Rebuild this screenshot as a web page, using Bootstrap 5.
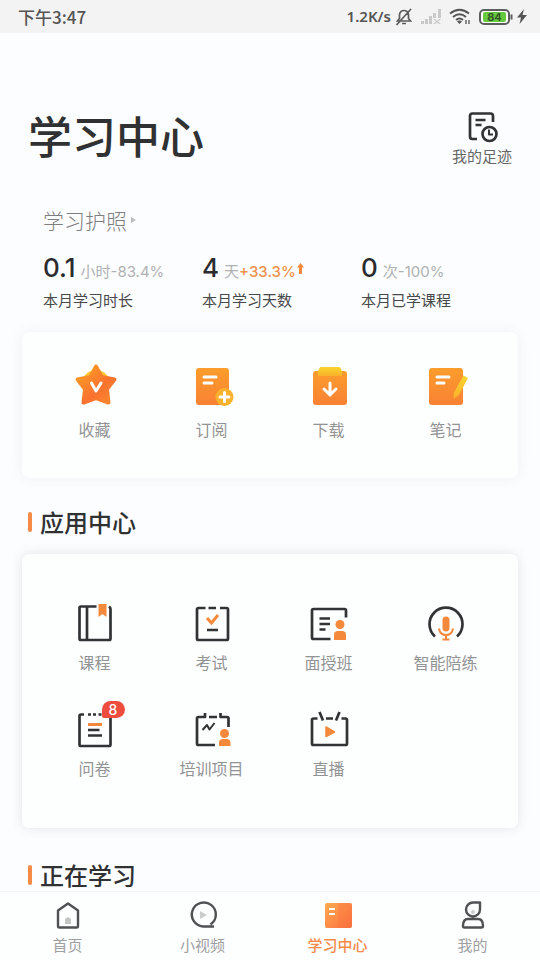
<!DOCTYPE html>
<html lang="zh-CN">
<head>
<meta charset="utf-8">
<meta name="viewport" content="width=device-width, initial-scale=1">
<title>学习中心</title>
<link href="https://cdn.jsdelivr.net/npm/bootstrap@5.3.0/dist/css/bootstrap.min.css" rel="stylesheet">
<style>
  body { font-family: "Noto Sans CJK SC", sans-serif; background: #fcfdfe; color: #303133; }
  a { color: inherit; text-decoration: none; }
  svg { display: block; overflow: visible; }
  .statusbar { background: #f3f3f3; height: 33px; padding: 0 13px 0 18px; color: #555; font-size: 17px; font-weight: 500; }
  .net-speed { font-family: "Noto Sans", sans-serif; font-size: 15px; font-weight: 600; }
  .scroller { min-height: 0; overflow-y: auto; scrollbar-width: none; }
  .scroller::-webkit-scrollbar { display: none; }
  .page-head { padding: 74px 28px 0 28px; }
  .page-title { font-size: 44px; line-height: 56px; font-weight: 500; }
  .footprint { font-size: 15px; line-height: 22px; color: #666; padding-top: 2px; }
  .passport { padding: 38px 20px 0 43px; }
  .passport-link { font-size: 21px; line-height: 30px; font-weight: 300; color: #7e7e80; }
  .stats { margin-top: 15px; }
  .stat-line { height: 36px; line-height: 36px; font-size: 15px; color: #b0b1b3; gap: 5px; }
  .figure-num { font-family: Inter, sans-serif; font-size: 26px; font-weight: 500; color: #2b2c2e; }
  .delta { font-family: Inter, sans-serif; }
  .up { color: #ee924e; font-weight: 500; }
  .rise { margin-left: -4px; }
  .stat-name { font-size: 15px; line-height: 22px; margin-top: 3px; color: #48494b; }
  .panel { margin: 0 22px; padding: 34px 14px 37px; border-radius: 7px; background: #fdfefe; box-shadow: 0 0 14px rgba(60,70,100,.07); }
  .panel-top { margin-top: 21px; }
  .panel-apps { margin-top: 15px; padding: 49px 14px 48px; row-gap: 35px; box-shadow: 0 0 12px rgba(50,60,80,.13); }
  .tile { font-size: 16px; line-height: 24px; color: #929395; gap: 7px; }
  .panel-top .tile { gap: 11px; }
  .section-title { font-size: 24px; line-height: 34px; font-weight: 500; margin: 27px 28px 0; gap: 8px; }
  .section-title::before { content: ""; width: 4px; height: 20px; border-radius: 2px; background: #f58b44; }
  .section-next { margin-top: 34px; line-height: 26px; }
  .count { position: absolute; left: 27px; top: -8px; width: 23px; height: 17px; border-radius: 9px 9px 9px 2px; background: #ee4c3c; color: #fff; font: 500 14px/17px Inter, sans-serif; text-align: center; }
  .tabbar { background: #fdfefe; border-top: 1px solid #f3f4f6; padding: 6px 0 4px; }
  .tab-item { font-size: 15px; line-height: 22px; color: #a0a0a2; gap: 2px; }
  .tab-item.active { color: #f48a4c; font-weight: 500; }
  .ln { fill: none; stroke: #323335; stroke-width: 2.7; stroke-linejoin: round; }
  .or { fill: #f5893b; }
  .orl { fill: none; stroke: #f5893b; stroke-width: 3; }
  .thin { stroke-width: 2; }
  .wl { fill: none; stroke: #fff; stroke-width: 3; stroke-linecap: round; stroke-linejoin: round; }
  .nv { fill: none; stroke: #505153; stroke-width: 2.4; stroke-linejoin: round; }
</style>
<script src="https://cdn.jsdelivr.net/npm/bootstrap@5.3.0/dist/js/bootstrap.bundle.min.js"></script>
</head>
<body>
<svg width="0" height="0" class="position-absolute" aria-hidden="true">
  <defs>
    <linearGradient id="gOrange" x1="0" y1="0" x2="0" y2="1"><stop offset="0" stop-color="#fb9d2c"/><stop offset="1" stop-color="#fa8134"/></linearGradient>
    <linearGradient id="gStar" x1="0" y1="0" x2="1" y2="1"><stop offset="0" stop-color="#ffa522"/><stop offset=".6" stop-color="#f9722f"/><stop offset="1" stop-color="#fa8a2c"/></linearGradient>
    <linearGradient id="gYellow" x1="0" y1="0" x2="0" y2="1"><stop offset="0" stop-color="#f8d630"/><stop offset="1" stop-color="#fbb02a"/></linearGradient>
    <linearGradient id="gBook" x1="0" y1="0" x2="1" y2="1"><stop offset="0" stop-color="#ffab50"/><stop offset="1" stop-color="#fb6f3d"/></linearGradient>
  </defs>
</svg>
<div class="d-flex flex-column vh-100">
  <div class="statusbar d-flex align-items-center justify-content-between flex-shrink-0">
    <span>下午3:47</span>
    <div class="d-flex align-items-center">
      <span class="net-speed me-1">1.2K/s</span>
      <svg width="18" height="18" viewBox="0 0 18 18" fill="none" stroke="#5c5c5c" stroke-width="1.7"><path d="M2.500 13h13l-2-2.500V7c0-6-9-6-9 0v3.500zM7 15.500h4M16 1 1.500 17"/></svg>
      <svg class="ms-2" width="20" height="15" viewBox="0 0 20 15" fill="#c9c9c9"><path d="M0 12h3v3H0zM4 10h3v5H4zM8 7h3v8H8zM12 4h3v5h-3zM17 0h3v9h-3zM12 10l2 0 2 2 2-2h2l-3 2.500 3 2.500h-2l-2-1.500-2 1.500h-2l3-2.500z"/></svg>
      <svg class="ms-2" width="22" height="17" viewBox="0 0 22 17" fill="none" stroke="#555" stroke-width="2"><path d="M1 5.500Q10.500-2 20 5.500M4 9q6.500-5.500 13 0M7 12q3.500-3 7 0"/><path d="M8 13.500q2.500-2 5 0L10.500 16z" fill="#555" stroke="none"/><path d="M17 12v4M20 12v4" stroke-width="1.300"/></svg>
      <svg class="ms-2" width="34" height="16" viewBox="0 0 34 16"><rect x="1" y="1" width="29" height="14" rx="4" fill="#fff" stroke="#5d5d5d" stroke-width="2"/><rect x="4" y="3" width="23" height="10" rx="2" fill="#67c93d"/><path d="M32.500 5.500v5" stroke="#5d5d5d" stroke-width="2"/><text x="15.500" y="12" text-anchor="middle" font-family="Inter, sans-serif" font-size="11" font-weight="700" fill="#35582a">84</text></svg>
      <svg class="ms-1" width="10" height="15" viewBox="0 0 10 15" fill="#555"><path d="M7 0 0 8.500h4L2.500 15 10 6H5.500z"/></svg>
    </div>
  </div>

  <main class="scroller flex-grow-1">
    <header class="page-head d-flex justify-content-between align-items-start">
      <h1 class="page-title m-0">学习中心</h1>
      <a href="#" class="footprint d-flex flex-column align-items-center gap-0">
        <svg width="34" height="36" viewBox="0 0 34 36" class="ln"><path d="M12 30H7.500Q5 30 5 27.500V7Q5 4.500 7.500 4.500h18Q28 4.500 28 7v6M10.500 11h10M10.500 16h6"/><circle cx="24.500" cy="25" r="7"/><path d="M24 20.500V25.500h4" class="thin"/></svg>
        <span>我的足迹</span>
      </a>
    </header>

    <section class="passport">
      <a href="#" class="passport-link d-inline-flex align-items-center gap-1">学习护照<svg width="5" height="6" viewBox="0 0 5 6"><path d="M0 0 5 3 0 6z" fill="#bbb"/></svg></a>
      <div class="row g-0 stats">
        <div class="col-4">
          <div class="stat-line d-flex align-items-baseline"><span class="figure-num">0.1</span><span>小时<span class="delta">-83.4%</span></span></div>
          <div class="stat-name">本月学习时长</div>
        </div>
        <div class="col-4">
          <div class="stat-line d-flex align-items-baseline"><span class="figure-num">4</span><span>天<span class="delta up">+33.3%</span></span><svg class="align-self-center rise" width="7" height="11" viewBox="0 0 7 11"><path d="M3.500 0 7 4.500H5V11H2V4.500H0z" class="or"/></svg></div>
          <div class="stat-name">本月学习天数</div>
        </div>
        <div class="col-4">
          <div class="stat-line d-flex align-items-baseline"><span class="figure-num">0</span><span>次<span class="delta">-100%</span></span></div>
          <div class="stat-name">本月已学课程</div>
        </div>
      </div>
    </section>

    <nav class="panel panel-top row g-0" aria-label="我的内容">
      <a href="#" class="col-3 tile d-flex flex-column align-items-center">
        <svg width="40" height="40" viewBox="0 0 40 40"><circle cx="21" cy="18" r="14" fill="#ffc531"/><path d="M21 .5 26.500 11 39.500 13.500 32 23 33.500 36.500 21 32 8.500 36.500 10 23 2.500 13.500 15.500 11z" fill="url(#gStar)" stroke="url(#gStar)" stroke-width="4" stroke-linejoin="round"/><path d="M16.500 17 21 25l5-8" class="wl"/></svg>
        收藏</a>
      <a href="#" class="col-3 tile d-flex flex-column align-items-center">
        <svg width="40" height="40" viewBox="0 0 40 40"><rect x="4" y="2" width="33" height="37" rx="3" fill="url(#gOrange)"/><path d="M12 11h12M12 17h8" class="wl"/><circle cx="32.500" cy="31" r="9" fill="#f9b22d"/><path d="M28 31h9M32.500 26.500v9" class="wl"/></svg>
        订阅</a>
      <a href="#" class="col-3 tile d-flex flex-column align-items-center">
        <svg width="40" height="40" viewBox="0 0 40 40"><rect x="4" y="5" width="34" height="34" rx="3" fill="url(#gOrange)"/><path d="M12 1h18q1 0 1.500 1L33 5v5H9V5l1.500-3q.5-1 1.500-1z" fill="url(#gYellow)"/><path d="M21 17v11M15 23l6 6 6-6" class="wl"/></svg>
        下载</a>
      <a href="#" class="col-3 tile d-flex flex-column align-items-center">
        <svg width="40" height="40" viewBox="0 0 40 40"><rect x="3" y="2" width="34" height="37" rx="3" fill="url(#gOrange)"/><path d="M11 11h12M11 17h7" class="wl"/><path d="M37.500 9.500 42 12 33 29l-5.500 4 .5-6.500z" fill="url(#gYellow)"/></svg>
        笔记</a>
    </nav>

    <h2 class="section-title d-flex align-items-center mb-0">应用中心</h2>
    <nav class="panel panel-apps row gx-0" aria-label="应用中心">
      <a href="#" class="col-3 tile d-flex flex-column align-items-center">
        <svg width="40" height="40" viewBox="0 0 40 40"><path d="M21.500 3.500H6Q4.500 3.500 4.500 5v30.500Q4.500 37 6 37h28q1.500 0 1.500-1.500V6q0-1.500-1.500-2.500M12 3.500V37" class="ln"/><path d="M23.500 1h8v13l-4-3-4 3z" class="or"/></svg>
        课程</a>
      <a href="#" class="col-3 tile d-flex flex-column align-items-center">
        <svg width="40" height="40" viewBox="0 0 40 40"><path d="M13.500 5H6.500Q5 5 5 6.500v29Q5 37 6.500 37h28q1.500 0 1.500-1.500v-29Q36 5 34.500 5H28M16.500 5h7.500M15 27h11" class="ln"/><path d="m15 15 4.500 5 6.500-8" class="orl"/></svg>
        考试</a>
      <a href="#" class="col-3 tile d-flex flex-column align-items-center">
        <svg width="40" height="40" viewBox="0 0 40 40"><path d="M37 14.500V7.500Q37 6 35.500 6h-31Q3 6 3 7.500v27Q3 36 4.500 36h17M10.500 15.500h10.500M10.500 21h10.500M10.500 26.500h6" class="ln"/><circle cx="31" cy="21.500" r="4.500" class="or"/><path d="M25 37v-5q0-4 4-4h4q4 0 4 4v5z" class="or"/></svg>
        面授班</a>
      <a href="#" class="col-3 tile d-flex flex-column align-items-center">
        <svg width="40" height="40" viewBox="0 0 40 40"><path d="M9 33.500a16.500 16.500 0 1 1 22 0" class="ln"/><rect x="16.500" y="13.500" width="7" height="15" rx="3.500" class="or"/><path d="M13 25.500q1 6.500 7 6.500t7-6.500M20 32v4M16.500 36.500h7" class="orl thin"/></svg>
        智能陪练</a>
      <a href="#" class="col-3 tile d-flex flex-column align-items-center">
        <span class="position-relative">
          <svg width="40" height="40" viewBox="0 0 40 40"><path d="M9 5.500H6Q4.500 5.500 4.500 7v28.500Q4.500 37 6 37h28q1.500 0 1.500-1.500V7q0-1.500-1.500-1.500h-3M13 5.500h3M18 5.500h3M23.500 5.500h3M13 21h11.500M13 26.500h14" class="ln"/><path d="M13 15.500h14" class="orl"/></svg>
          <span class="count">8</span>
        </span>
        问卷</a>
      <a href="#" class="col-3 tile d-flex flex-column align-items-center">
        <svg width="40" height="40" viewBox="0 0 40 40"><path d="M13 4v4H6.500Q5 8 5 9.500V34.500Q5 36 6.500 36H23M28.500 4v4h6.500q1.500 0 1.500 1.500V18M17 8h8" class="ln"/><path d="m10.500 21 4.500-5 2.500 4.500 5-6.500" class="ln thin"/><circle cx="32.500" cy="24.500" r="4.500" class="or"/><path d="M27 37v-3q0-4 4-4h3.500q4 0 4 4v3z" class="or"/></svg>
        培训项目</a>
      <a href="#" class="col-3 tile d-flex flex-column align-items-center">
        <svg width="40" height="40" viewBox="0 0 40 40"><path d="M8.500 9.500H4.500Q3 9.500 3 11v23.500Q3 36 4.500 36h32q1.500 0 1.500-1.500V11q0-1.500-1.500-1.500h-4M17 9.500h7M10.500 3l3.500 8.500M30.500 3l-3.500 8.500" class="ln"/><path d="M17 18v9.500l8.500-4.500z" class="or" stroke="#f5893b" stroke-width="1.500" stroke-linejoin="round"/></svg>
        直播</a>
    </nav>

    <h2 class="section-title section-next d-flex align-items-center mb-0">正在学习</h2>
  </main>

  <nav class="tabbar row g-0 flex-shrink-0" aria-label="主导航">
    <a href="#" class="col-3 tab-item d-flex flex-column align-items-center">
      <svg width="34" height="34" viewBox="0 0 34 34"><path d="M17 5.500 7 12.500V28q0 1.500 1.500 1.500h17Q27 29.500 27 28V12.500z" class="nv"/><path d="M14 26v-5l3-2 3 2v5z" fill="#c4c4c4"/></svg>
      首页</a>
    <a href="#" class="col-3 tab-item d-flex flex-column align-items-center">
      <svg width="34" height="34" viewBox="0 0 34 34"><path d="M17 28.500h11M24.500 26.500a12 12 0 1 0-7.500 2" class="nv"/><path d="M14 13v8l7-4z" fill="#ccc"/></svg>
      小视频</a>
    <a href="#" class="col-3 tab-item active d-flex flex-column align-items-center" aria-current="page">
      <svg width="34" height="34" viewBox="0 0 34 34"><rect x="4" y="5" width="27" height="25" rx="2" fill="url(#gBook)"/><path d="M17 5h12q2 0 2 2v21q0 2-2 2H17z" fill="#fa7040" opacity=".3"/><path d="M8 11h6M8 16h6" stroke="#fff" stroke-width="2"/></svg>
      学习中心</a>
    <a href="#" class="col-3 tab-item d-flex flex-column align-items-center">
      <svg width="34" height="34" viewBox="0 0 34 34"><path d="M24 4.500h-7a7 7 0 1 0 7 7zM12 21h10q5 0 5 7 0 1.500-1.500 1.500h-17Q7 29.500 7 28q0-7 5-7z" class="nv"/><circle cx="17" cy="14" r="2" fill="#ccc"/></svg>
      我的</a>
  </nav>
</div>
</body>
</html>
